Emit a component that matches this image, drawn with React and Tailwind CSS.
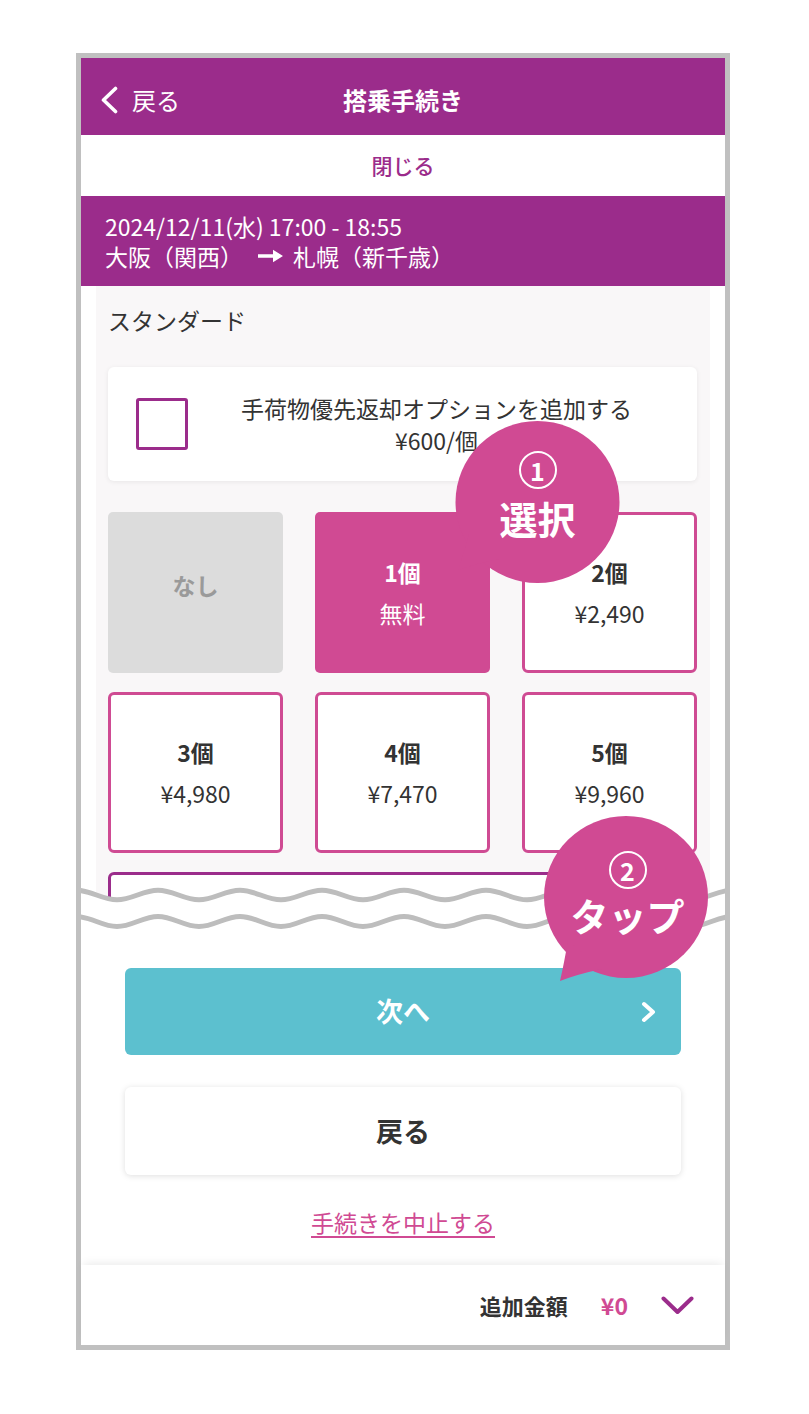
import React from 'react';

function wavePath(yc, amp, period, x0, width) {
  const h = period / 2;
  let x = x0;
  let y = yc - amp;
  let up = true;
  let d = `M${x},${y}`;
  while (x < width + period) {
    const ny = up ? yc + amp : yc - amp;
    d += ` C${(x + h * 0.364).toFixed(2)},${y} ${(x + h * 0.636).toFixed(2)},${ny} ${(x + h).toFixed(2)},${ny}`;
    x += h;
    y = ny;
    up = !up;
  }
  return { d, endX: x };
}

function Waves() {
  const w1 = wavePath(15, 4.8, 82, -87, 644);
  const w2 = wavePath(41.5, 5, 82, -87, 644);
  const fill = `${w1.d} L${w1.endX},60 L-87,60 Z`;
  return (
    <svg className="absolute left-0 top-[822px]" width="644" height="60" viewBox="0 0 644 60">
      <path d={fill} fill="#ffffff" />
      <path d={w1.d} fill="none" stroke="#bdbdbd" strokeWidth="5" />
      <path d={w2.d} fill="none" stroke="#bdbdbd" strokeWidth="5" />
    </svg>
  );
}

function Callout({ pos, cx, cy, tail, num, label, textPad, gap }) {
  return (
    <div className={`absolute w-[175px] h-[175px] ${pos}`}>
      <svg className="absolute left-0 top-0" width="175" height="175" viewBox="0 0 175 175">
        <ellipse cx={cx} cy={cy} rx="82" ry="81" fill="#d04a93" />
        <path d={tail} fill="#d04a93" />
      </svg>
      <div className={`absolute left-0 top-0 w-full flex flex-col items-center ${textPad} ${gap}`}>
        <div className="w-[38px] h-[38px] rounded-full border-2 border-white flex items-center justify-center text-white text-[25px] font-bold leading-none">
          {num}
        </div>
        <div className="text-white text-[38px] font-bold leading-[40px] whitespace-nowrap">{label}</div>
      </div>
    </div>
  );
}

function Tile({ title, price, variant }) {
  if (variant === 'none') {
    return (
      <div className="h-[161px] rounded-[5px] bg-[#dcdcdc] flex items-center justify-center pb-[14px]">
        <span className="text-[23px] font-bold text-[#9a9a9a]">{title}</span>
      </div>
    );
  }
  if (variant === 'selected') {
    return (
      <div className="h-[161px] rounded-[5px] bg-[#d04a93] flex flex-col items-center justify-center gap-[11px]">
        <span className="text-[23px] leading-[30px] font-bold text-white">{title}</span>
        <span className="text-[23px] leading-[30px] text-white">{price}</span>
      </div>
    );
  }
  return (
    <div className="h-[161px] rounded-[6px] bg-white border-[3px] border-[#cf4b93] flex flex-col items-center justify-center gap-[11px]">
      <span className="text-[23px] leading-[30px] font-bold text-[#333333]">{title}</span>
      <span className="text-[23px] leading-[30px] text-[#333333]">{price}</span>
    </div>
  );
}

export default function App() {
  return (
    <div className="min-h-[1414px] bg-white pt-[53px] font-['Noto_Sans_CJK_JP',sans-serif]">
      <div className="relative ml-[76px] w-[654px] border-[5px] border-[#c0c0c0] bg-white">
        {/* header */}
        <div className="h-[77px] bg-[#9b2c8b] grid grid-cols-[1fr_auto_1fr] items-center pt-[7px]">
          <div className="flex items-center pl-[19px] gap-[14px]">
            <svg width="18" height="28" viewBox="0 0 18 28">
              <path d="M15.5 2.5 L3.5 14 L15.5 25.5" fill="none" stroke="#ffffff" strokeWidth="3.6" strokeLinecap="round" strokeLinejoin="round" />
            </svg>
            <span className="text-white text-[24px] leading-none">戻る</span>
          </div>
          <div className="text-white text-[24px] font-bold leading-none">搭乗手続き</div>
          <div />
        </div>
        {/* close */}
        <div className="h-[61px] bg-white flex items-center justify-center">
          <span className="text-[#9b2c8b] text-[21px] font-medium">閉じる</span>
        </div>
        {/* flight */}
        <div className="h-[90px] bg-[#9b2c8b] pl-[24px] pt-[15px] text-white text-[23px] leading-[30px]">
          <div>2024/12/11(水) 17:00 - 18:55</div>
          <div className="flex items-center">
            <span>大阪（関西）</span>
            <svg className="ml-[15px] mr-[10px]" width="25" height="14" viewBox="0 0 25 14">
              <path d="M0 5.3 H15 V0.8 L25 7 L15 13.2 V8.7 H0 Z" fill="#ffffff" />
            </svg>
            <span>札幌（新千歳）</span>
          </div>
        </div>
        {/* content */}
        <div className="h-[619px] overflow-hidden px-[15px] bg-white">
          <div className="h-full bg-[#f9f7f8] pl-[12px] pr-[13px] pt-[19px]">
            <p className="text-[23px] leading-[30px] text-[#333333]">スタンダード</p>
            <div className="mt-[32px] h-[114px] rounded-[6px] bg-white shadow-[0_1px_5px_rgba(0,0,0,0.07)] flex items-center">
              <div className="ml-[28px] w-[52px] h-[52px] shrink-0 border-[3px] border-[#9b2c8b] rounded-[3px] bg-white" />
              <div className="flex-1 ml-[16px] mr-[28px] text-center text-[23px] leading-[32px] text-[#333333]">
                <div>手荷物優先返却オプションを追加する</div>
                <div>¥600/個</div>
              </div>
            </div>
            <div className="mt-[31px] grid grid-cols-3 gap-x-[32px] gap-y-[19px]">
              <Tile title="なし" variant="none" />
              <Tile title="1個" price="無料" variant="selected" />
              <Tile title="2個" price="¥2,490" />
              <Tile title="3個" price="¥4,980" />
              <Tile title="4個" price="¥7,470" />
              <Tile title="5個" price="¥9,960" />
              <div className="col-span-3 h-[161px] rounded-[6px] bg-white border-[3px] border-[#9b2c8b]" />
            </div>
          </div>
        </div>
        {/* bottom section */}
        <div className="h-[360px] bg-white pt-[63px] px-[44px]">
          <div className="relative h-[87px] rounded-[6px] bg-[#5cc0cf] flex items-center justify-center">
            <span className="text-white text-[27px] font-bold">次へ</span>
            <svg className="absolute right-[23px] top-[33px]" width="18" height="22" viewBox="0 0 18 22">
              <path d="M4 3 L13 11 L4 19" fill="none" stroke="#ffffff" strokeWidth="4" strokeLinecap="round" strokeLinejoin="round" />
            </svg>
          </div>
          <div className="mt-[32px] h-[88px] rounded-[6px] bg-white shadow-[0_1px_6px_rgba(0,0,0,0.13)] flex items-center justify-center">
            <span className="text-[#333333] text-[27px] font-bold">戻る</span>
          </div>
          <div className="mt-[32px] text-center leading-[30px]">
            <span className="text-[#d04a93] text-[23px] underline underline-offset-[4px] decoration-[1.5px]">手続きを中止する</span>
          </div>
        </div>
        {/* bottom bar */}
        <div className="h-[80px] bg-white flex items-center justify-end pr-[31px] shadow-[0_-5px_8px_-3px_rgba(0,0,0,0.08)]">
          <span className="text-[#333333] text-[22px] font-bold">追加金額</span>
          <span className="ml-[33px] text-[#d04a93] text-[23px] font-bold">¥0</span>
          <svg className="ml-[33px]" width="33" height="19" viewBox="0 0 33 19">
            <path d="M2.5 2.5 L16.5 16 L30.5 2.5" fill="none" stroke="#9b2c8b" strokeWidth="4" strokeLinecap="round" strokeLinejoin="round" />
          </svg>
        </div>

        <Waves />

        <Callout
          pos="left-[369px] top-[357px]"
          cx="87.5"
          cy="87"
          tail="M20,115 Q14,138 8,155 Q28,148 50,144 Z"
          num="1"
          label="選択"
          textPad="pt-[36px]"
          gap="gap-[9px]"
        />
        <Callout
          pos="left-[459px] top-[754px]"
          cx="86"
          cy="85"
          tail="M28,128 Q24,152 20,169 Q38,162 62,157 Z"
          num="2"
          label="タップ"
          textPad="pt-[39px]"
          gap="gap-[6px]"
        />
      </div>
    </div>
  );
}
